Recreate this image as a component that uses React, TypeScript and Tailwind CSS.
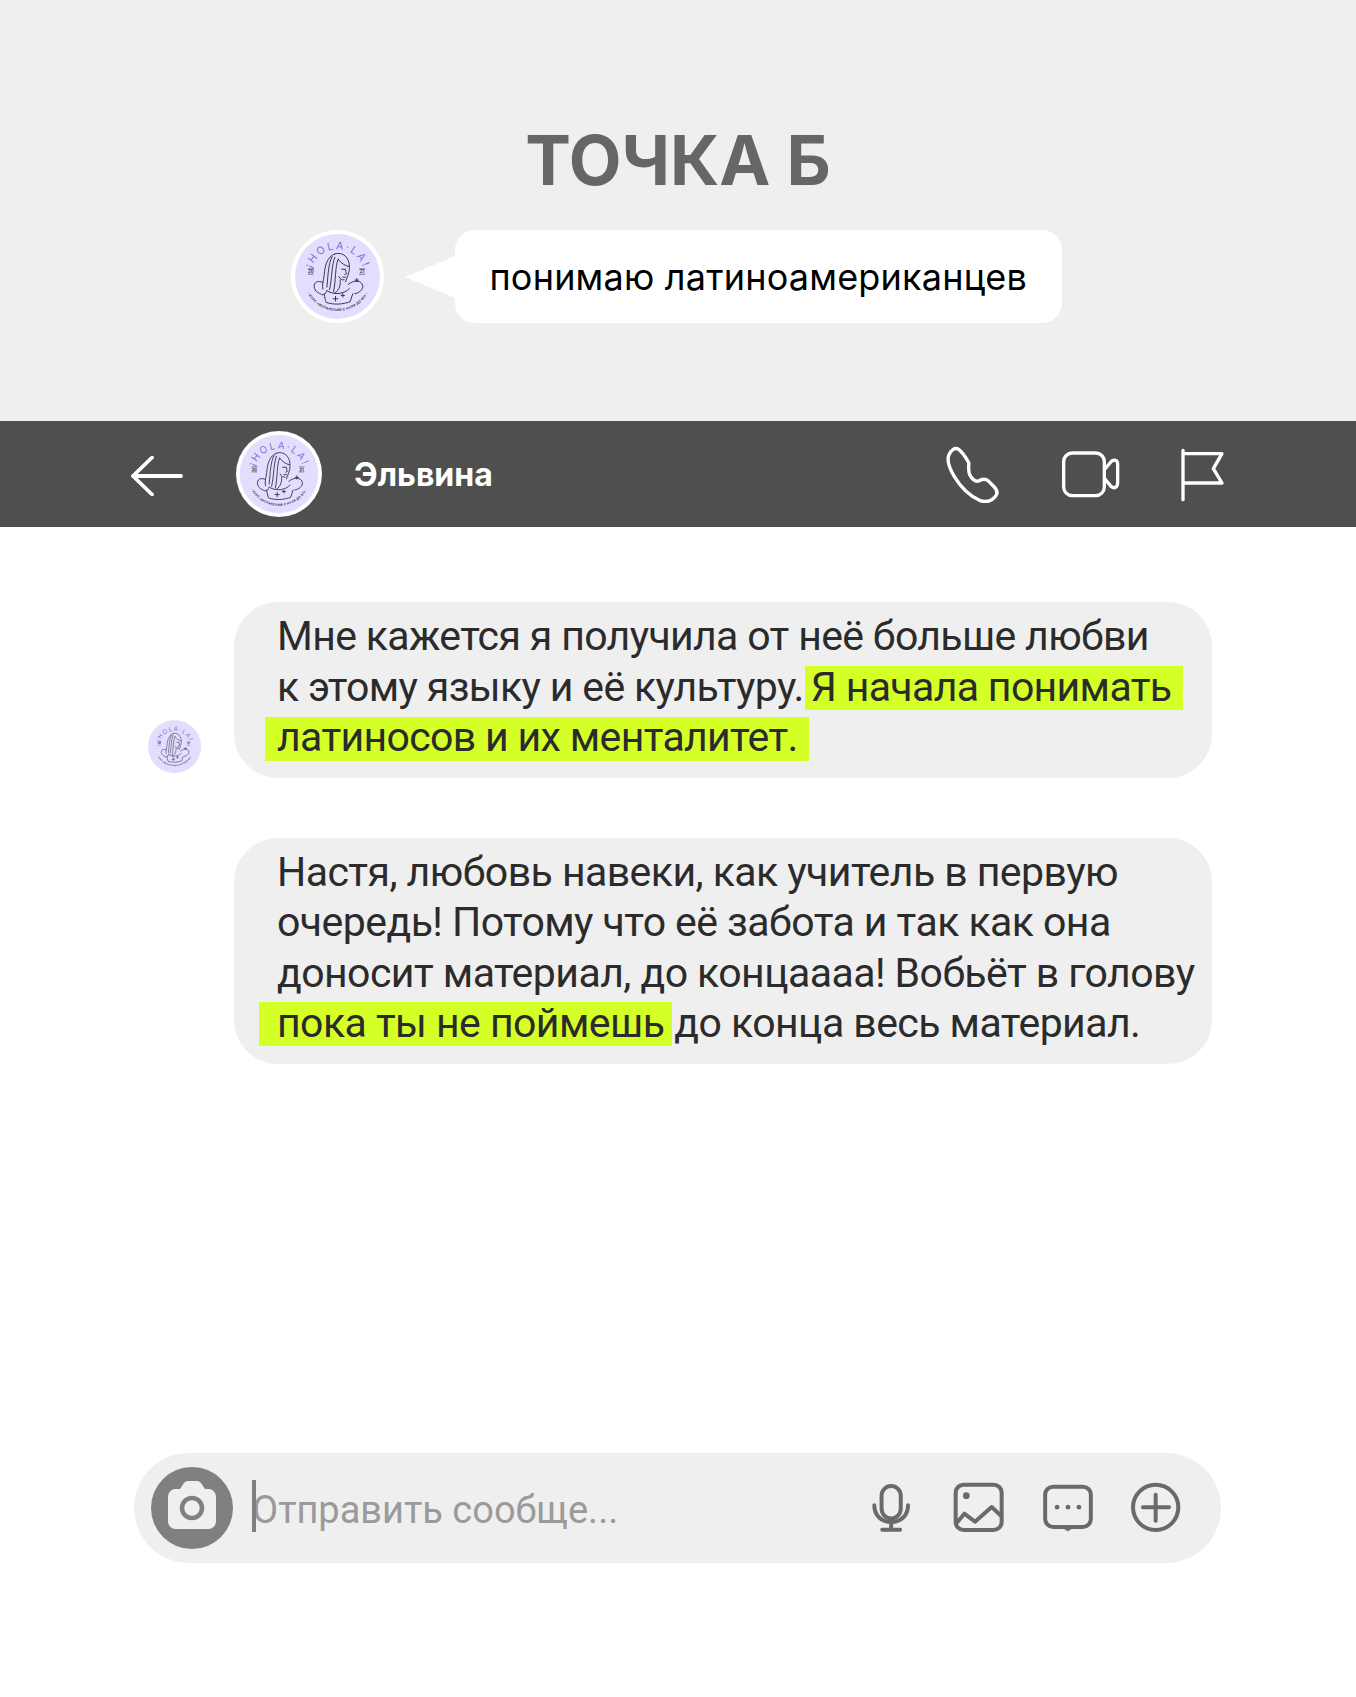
import React from "react";

function Logo({ ring, sizeClass }: { ring: boolean; sizeClass: string }) {
  return (
    <svg viewBox="0 0 280 280" className={sizeClass}>
      <defs>
        <path id="arcTop" d="M 58 140 A 82 82 0 0 1 222 140" fill="none" />
        <path id="arcBot" d="M 36 140 A 104 104 0 0 0 244 140" fill="none" />
      </defs>
      {ring && <circle cx="140" cy="140" r="140" fill="#ffffff" />}
      <circle cx="140" cy="140" r={ring ? 128 : 140} fill="#e3defd" />
      <text fontFamily="Inter, sans-serif" fontSize="32" fill="#8471d6" letterSpacing="6" textAnchor="middle">
        <textPath href="#arcTop" startOffset="50%">¡HOLA·LA!</textPath>
      </text>
      <text fontFamily="Inter, sans-serif" fontSize="10" fontWeight="700" fill="#3a3560" textAnchor="middle" letterSpacing="0.8">
        <textPath href="#arcBot" startOffset="50%">- КУРС «ИСПАНСКИЙ С НУЛЯ ДО B1» -</textPath>
      </text>
      <text x="60" y="129" fontFamily="Inter, sans-serif" fontSize="13" fontWeight="700" fill="#3a3560" textAnchor="middle">20</text>
      <path d="M51 133H69M51 117H69" stroke="#3a3560" strokeWidth="2" />
      <text x="214" y="129" fontFamily="Inter, sans-serif" fontSize="13" fontWeight="700" fill="#3a3560" textAnchor="middle">21</text>
      <path d="M205 133H223M205 117H223" stroke="#3a3560" strokeWidth="2" />
      <g fill="none" stroke="#2f2b45" strokeWidth="2.8" strokeLinecap="round" strokeLinejoin="round">
        <path d="M132 72C108 80 102 110 100 135C98 155 92 165 96 178" />
        <path d="M132 72C158 64 176 84 176 112C176 130 168 144 164 156" />
        <path d="M124 80C112 100 112 135 108 172" />
        <path d="M132 82C122 104 124 145 116 180" />
        <path d="M142 88C132 110 136 150 128 186" />
        <path d="M142 88C150 100 164 108 174 110" />
        <path d="M160 150C154 152 148 148 144 140" />
        <path d="M152 118H164M164 120L167 132L162 134M156 142H164" />
        <path d="M148 150C150 165 146 180 132 190" />
        <path d="M96 158C80 150 68 158 70 172C72 186 84 190 92 194C100 198 106 190 108 182" />
        <path d="M172 164C190 148 214 152 216 168C218 180 204 190 192 192" />
        <path d="M100 192C102 206 104 214 106 218C130 226 156 224 178 216L186 192" />
        <path d="M110 184C130 196 160 194 176 176" />
        <path d="M134 200V214M127 207H141M156 192V202M151 197H161M198 146V156M193 151H203" />
      </g>
    </svg>
  );
}

const hl = "inline-block h-[44px] bg-[#d4ff27]";

export default function App() {
  return (
    <div className="w-[1356px] h-[1697px] bg-white flex flex-col font-['Roboto',sans-serif] overflow-hidden">
      <section className="h-[421px] bg-[#efefef] flex flex-col items-center pt-[122px]">
        <h1 className="h-[78px] leading-[78px] text-[68.5px] font-bold text-[#666666] font-['Inter',sans-serif]">ТОЧКА Б</h1>
        <div className="flex items-center mt-[30px] ml-[-4px]">
          <Logo ring sizeClass="w-[93px] h-[93px]" />
          <div className="ml-[21px] w-0 h-0 border-y-[21px] border-y-transparent border-r-[50px] border-r-white" />
          <div className="h-[93px] w-[607px] bg-white rounded-[20px] flex items-center pl-[35px] text-[36px] tracking-[0.2px] text-black font-['Inter',sans-serif] whitespace-nowrap">
            понимаю латиноамериканцев
          </div>
        </div>
      </section>

      <header className="h-[106px] bg-[#4f4f4f] flex items-center pl-[131px] shrink-0">
        <svg viewBox="0 0 52 40" className="w-[52px] h-[40px] mt-[4px]" fill="none" stroke="#fff" strokeWidth="3.8" strokeLinecap="round" strokeLinejoin="round">
          <path d="M50 20H2M21 1.5L2 20L21 38.5" />
        </svg>
        <div className="ml-[53px]">
          <Logo ring sizeClass="w-[86px] h-[86px] block" />
        </div>
        <div className="ml-[32px] mt-[2px] text-[32px] font-bold text-white font-['Inter',sans-serif] w-[591px]">Эльвина</div>
        <svg viewBox="130 80 170 170" className="ml-[-1px] w-[57px] h-[57px]" fill="none" stroke="#fff" strokeWidth="10" strokeLinecap="round" strokeLinejoin="round">
          <path d="M172 89C162 84 150 92 144 108C138 126 146 146 160 170C178 200 204 228 236 242C252 248 270 246 282 232C292 222 290 212 278 200L262 184C252 176 240 180 232 185C222 186 212 176 206 164C202 154 204 140 204 130C196 116 184 96 172 89Z" />
        </svg>
        <svg viewBox="480 90 180 150" className="ml-[60px] w-[60px] h-[50px]" fill="none" stroke="#fff" strokeWidth="10" strokeLinecap="round" strokeLinejoin="round">
          <rect x="488" y="102" width="122" height="128" rx="26" />
          <path d="M612 150L632 126C642 120 650 124 650 136V190C650 206 640 210 630 202L612 180" />
        </svg>
        <svg viewBox="840 80 135 165" className="ml-[59px] w-[45px] h-[55px]" fill="none" stroke="#fff" strokeWidth="10" strokeLinecap="round" strokeLinejoin="round">
          <path d="M849 90V238M849 100H966L940 145L966 188H849" />
        </svg>
      </header>

      <main className="flex-1 flex flex-col pl-[148px] pt-[75px]">
        <div className="flex items-end">
          <div className="mb-[5px]">
            <Logo ring={false} sizeClass="w-[53px] h-[53px] block" />
          </div>
          <Bubble tracking="tracking-[-0.65px]">
            <div>Мне кажется я получила от неё больше любви</div>
            <div>к этому языку и её культуру.<span className={`${hl} leading-[42px] ml-[1px] pl-[6px] pr-[12px]`}>Я начала понимать</span></div>
            <div><span className={`${hl} leading-[40px] ml-[-12px] pl-[12px] pr-[11px]`}>латиносов и их менталитет.</span></div>
          </Bubble>
        </div>
        <div className="mt-[60px] ml-[53px]">
          <Bubble tracking="tracking-[-0.55px]">
            <div>Настя, любовь навеки, как учитель в первую</div>
            <div>очередь! Потому что её забота и так как она</div>
            <div>доносит материал, до концаааа! Вобьёт в голову</div>
            <div><span className={`${hl} leading-[42px] ml-[-18px] pl-[18px] pr-[8px]`}>пока ты не поймешь</span><span className="ml-[2px]">до конца весь материал.</span></div>
          </Bubble>
        </div>
      </main>

      <footer className="ml-[134px] mb-[134px] w-[1087px] h-[110px] rounded-[55px] bg-[#efefef] flex items-center pl-[17px]">
        <svg viewBox="0 0 82 82" className="w-[82px] h-[82px] shrink-0">
          <circle cx="41" cy="41" r="41" fill="#808080" />
          <path d="M24 22H29L33 16C34 15 35 14 37 14H46C48 14 49 15 50 16L54 22H58C62 22 65 26 65 30V54C65 58 62 62 58 62H24C20 62 17 58 17 54V30C17 26 20 22 24 22Z" fill="#efefef" />
          <circle cx="41" cy="41" r="10" fill="none" stroke="#808080" strokeWidth="4.5" />
        </svg>
        <div className="relative ml-[19px] w-[612px] pt-[4px] text-[38px] text-[#9a9a9a] whitespace-nowrap">
          <span className="absolute left-0 top-[2px] w-[4px] h-[52px] bg-[#808080]" />
          Отправить сообще...
        </div>
        <div className="flex items-center">
          <svg viewBox="55 95 130 160" className="ml-[6px] w-[43px] h-[53px]" fill="none" stroke="#6a6a6a" strokeWidth="12" strokeLinecap="round" strokeLinejoin="round">
            <rect x="90" y="107" width="58" height="98" rx="29" />
            <path d="M68 165C68 196 90 216 119 216C148 216 170 196 170 165M119 216V238M92 239H146" />
          </svg>
          <svg viewBox="308 97 156 156" className="ml-[40px] w-[52px] h-[52px]" fill="none" stroke="#6a6a6a" strokeWidth="12" strokeLinecap="round" strokeLinejoin="round">
            <rect x="316" y="105" width="138" height="136" rx="24" />
            <circle cx="348" cy="138" r="10" fill="#6a6a6a" stroke="none" />
            <path d="M322 216L342 192L374 216L424 172L452 198" />
          </svg>
          <svg viewBox="572 97 156 148" className="ml-[37px] w-[52px] h-[49px]" fill="none" stroke="#6a6a6a" strokeWidth="12" strokeLinecap="round" strokeLinejoin="round">
            <rect x="581" y="105" width="138" height="122" rx="24" />
            <path d="M638 231H662L650 239Z" fill="#6a6a6a" strokeWidth="2" />
            <circle cx="617" cy="167" r="7" fill="#6a6a6a" stroke="none" />
            <circle cx="650" cy="167" r="7" fill="#6a6a6a" stroke="none" />
            <circle cx="683" cy="167" r="7" fill="#6a6a6a" stroke="none" />
          </svg>
          <svg viewBox="838 97 156 156" className="ml-[36px] w-[52px] h-[52px]" fill="none" stroke="#6a6a6a" strokeWidth="12" strokeLinecap="round" strokeLinejoin="round">
            <circle cx="915" cy="173" r="68" />
            <path d="M877 173H955M915 135V213" />
          </svg>
        </div>
      </footer>
    </div>
  );
}

function Bubble({ children, tracking }: { children: React.ReactNode; tracking: string }) {
  return (
    <div className={`ml-[33px] w-[978px] bg-[#efefef] rounded-[44px] pt-[9px] pb-[15px] pl-[43px] text-[41px] leading-[50.5px] ${tracking} text-[#2b2b2b] whitespace-nowrap`}>
      {children}
    </div>
  );
}
